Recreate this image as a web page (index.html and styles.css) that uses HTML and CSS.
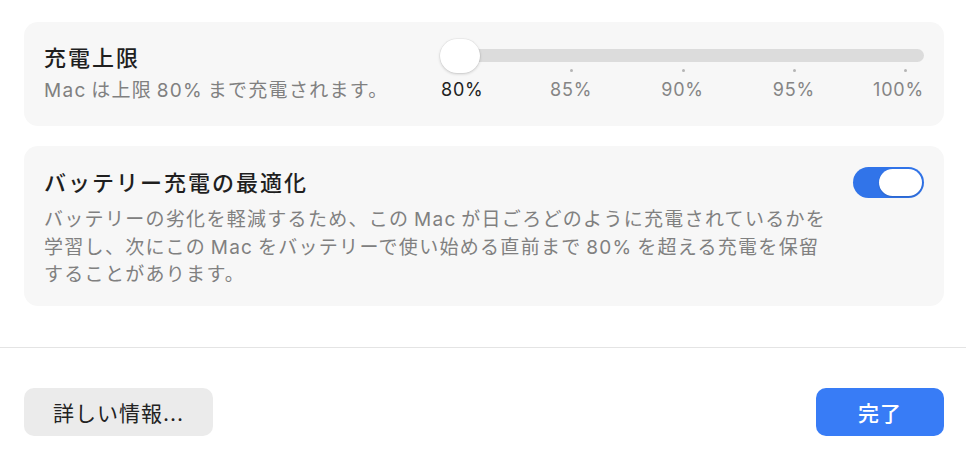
FILE: index.html
```html
<!DOCTYPE html>
<html lang="ja">
  <head>
    <meta charset="UTF-8" />
    <title>バッテリー充電</title>
    <link rel="stylesheet" href="styles.css">
  </head>
  <body>
    <div class="content">
      <div class="card limit-card">
        <div class="text">
          <div class="title">充電上限</div>
          <div class="desc">Mac は上限 80% まで充電されます。</div>
        </div>
        <div class="slider">
          <div class="track-row">
            <div class="track"></div>
            <div class="knob"></div>
          </div>
          <div class="ticks">
            <span></span><span></span><span></span><span></span><span></span>
          </div>
          <div class="labels">
            <span class="current">80%</span>
            <span>85%</span>
            <span>90%</span>
            <span>95%</span>
            <span>100%</span>
          </div>
        </div>
      </div>

      <div class="card opt-card">
        <div class="text">
          <div class="title">バッテリー充電の最適化</div>
          <div class="desc long">
            バッテリーの劣化を軽減するため、この Mac が日ごろどのように充電されているかを<br>
            学習し、次にこの Mac をバッテリーで使い始める直前まで 80% を超える充電を保留<br>
            することがあります。
          </div>
        </div>
        <div class="toggle on"><div class="toggle-knob"></div></div>
      </div>
    </div>

    <div class="divider"></div>

    <div class="footer">
      <button class="btn">詳しい情報...</button>
      <button class="btn primary">完了</button>
    </div>
  </body>
</html>
```

FILE: styles.css
```css
body {
  margin: 0;
  background: #ffffff;
  font-family: "Inter", "Noto Sans CJK JP", sans-serif;
  color: #1f1f1f;
}
.content {
  padding: 22px 22px 0 24px;
}
.card {
  display: flex;
  justify-content: space-between;
  align-items: flex-start;
  background: #f7f7f7;
  border-radius: 14px;
  padding: 22px 20px;
}
.title {
  font-size: 22px;
  line-height: 28px;
  font-weight: 500;
  letter-spacing: 2px;
  color: #1f1f1f;
}
.desc {
  font-size: 19px;
  line-height: 26px;
  letter-spacing: 1.3px;
  word-spacing: -2px;
  color: #808080;
  margin-top: 6px;
}

/* slider */
.slider {
  width: 483px;
  margin-top: -5px;
}
.track-row {
  position: relative;
  height: 30px;
  padding-top: 10px;
  box-sizing: border-box;
}
.track {
  height: 13px;
  border-radius: 7px;
  background: #dcdcdc;
}
.knob {
  position: absolute;
  left: -1px;
  top: 0;
  width: 40px;
  height: 34px;
  border-radius: 17px;
  background: #ffffff;
  box-shadow: 0 1px 3px rgba(0, 0, 0, 0.18), 0 0 0 0.5px rgba(0, 0, 0, 0.06);
}
.ticks {
  display: flex;
  justify-content: space-between;
  padding: 0 17px 0 18px;
  height: 3px;
}
.ticks span {
  width: 3px;
  height: 3px;
  border-radius: 50%;
  background: #b5b5b5;
}
.labels {
  display: grid;
  grid-template-columns: 1fr 1.5fr 1.5fr 1.5fr 1fr;
  margin-top: 7px;
  font-size: 18px;
  line-height: 22px;
  letter-spacing: 0.8px;
  color: #858585;
}
.labels span {
  text-align: center;
}
.labels span:first-child {
  text-align: left;
}
.labels span:last-child {
  text-align: right;
}
.labels .current {
  color: #222222;
}

/* second card */
.opt-card {
  margin-top: 20px;
  padding: 21px 20px 17px;
}
.opt-card .text {
  padding-top: 2px;
}
.desc.long {
  line-height: 27.5px;
  margin-top: 9px;
}
.toggle {
  width: 71px;
  height: 31px;
  border-radius: 16px;
  background: #d9d9d9;
  display: flex;
  align-items: center;
  padding: 0 2px;
  box-sizing: border-box;
}
.toggle.on {
  background: #3174e9;
  justify-content: flex-end;
}
.toggle-knob {
  width: 43px;
  height: 27px;
  border-radius: 14px;
  background: #ffffff;
  box-shadow: 0 1px 2px rgba(0, 0, 0, 0.15);
}

.divider {
  margin-top: 41px;
  height: 1.5px;
  background: #e4e4e4;
}

.footer {
  display: flex;
  justify-content: space-between;
  padding: 40px 22px 0 24px;
}
.btn {
  height: 48px;
  width: 189px;
  border: none;
  border-radius: 10px;
  background: #ebebeb;
  color: #222222;
  font-family: "Inter", "Noto Sans CJK JP", sans-serif;
  font-size: 21px;
  letter-spacing: 1px;
  cursor: pointer;
}
.btn.primary {
  width: 128px;
  background: #387cf6;
  color: #ffffff;
  font-weight: 500;
}
```
